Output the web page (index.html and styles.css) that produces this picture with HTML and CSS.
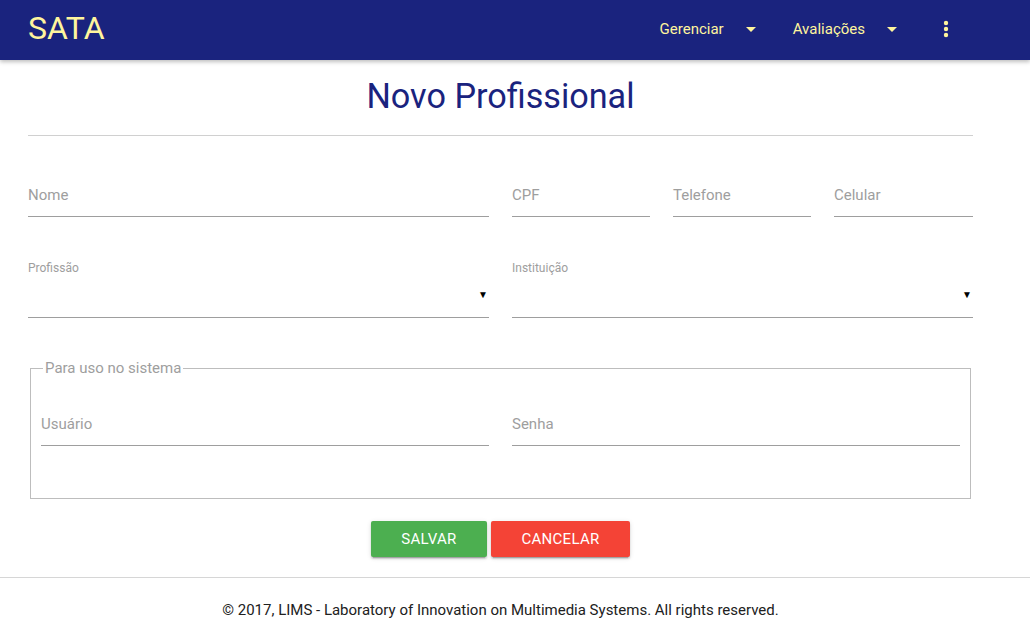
FILE: index.html
```html
<!DOCTYPE html>
<html lang="pt">
<head>
<meta charset="utf-8">
<title>SATA - Novo Profissional</title>
<link rel="stylesheet" href="styles.css">
</head>
<body>
<nav class="navbar">
  <a class="brand">SATA</a>
  <ul class="menu">
    <li class="menu-item">Gerenciar <span class="caret"></span></li>
    <li class="menu-item">Avaliações <span class="caret"></span></li>
    <li class="menu-more">
      <svg width="6" height="18" viewBox="0 0 6 18"><circle cx="3" cy="3" r="2.2" fill="#fff59d"/><circle cx="3" cy="9" r="2.2" fill="#fff59d"/><circle cx="3" cy="15" r="2.2" fill="#fff59d"/></svg>
    </li>
  </ul>
</nav>

<main class="container">
  <h1 class="title">Novo Profissional</h1>
  <hr class="divider">

  <form class="form">
    <div class="row row-1">
      <div class="field"><span class="placeholder">Nome</span></div>
      <div class="field"><span class="placeholder">CPF</span></div>
      <div class="field"><span class="placeholder">Telefone</span></div>
      <div class="field"><span class="placeholder">Celular</span></div>
    </div>

    <div class="row row-2">
      <div class="select-field">
        <label class="small-label">Profissão</label>
        <div class="select"><span class="arrow">▼</span></div>
      </div>
      <div class="select-field">
        <label class="small-label">Instituição</label>
        <div class="select"><span class="arrow">▼</span></div>
      </div>
    </div>

    <fieldset class="system">
      <legend>Para uso no sistema</legend>
      <div class="row row-sys">
        <div class="field"><span class="placeholder">Usuário</span></div>
        <div class="field"><span class="placeholder">Senha</span></div>
      </div>
    </fieldset>

    <div class="actions">
      <button type="button" class="btn btn-save">SALVAR</button>
      <button type="button" class="btn btn-cancel">CANCELAR</button>
    </div>
  </form>
</main>

<footer class="footer">
  <p class="footer-text">© 2017, LIMS - Laboratory of Innovation on Multimedia Systems. All rights reserved.</p>
</footer>
</body>
</html>
```
FILE: styles.css
```css
* { box-sizing: border-box; }
html, body { margin: 0; padding: 0; }
body {
  font-family: Roboto, "Liberation Sans", Arial, sans-serif;
  background: #fff;
  color: #212121;
}

.navbar {
  height: 60px;
  background: #1a237e;
  display: flex;
  align-items: center;
  justify-content: space-between;
  padding: 0 0 0 28px;
  box-shadow: 0 2px 4px rgba(0,0,0,0.25);
  position: relative;
  z-index: 1;
}
.brand {
  color: #fff59d;
  font-size: 32px;
  line-height: 60px;
  margin-top: -4px;
}
.menu {
  list-style: none;
  margin: 0;
  padding: 0;
  display: flex;
  align-items: center;
  height: 60px;
  margin-top: -2px;
}
.menu-item {
  color: #fff59d;
  font-size: 15px;
  display: flex;
  align-items: center;
  margin-right: 37px;
}
.caret {
  display: inline-block;
  width: 0; height: 0;
  border-left: 5px solid transparent;
  border-right: 5px solid transparent;
  border-top: 5px solid #fff59d;
  margin-left: 22px;
}
.menu-more {
  display: flex;
  justify-content: center;
  box-sizing: content-box;
  width: 12px;
  padding: 0 78px 0 0;
  margin-left: 6px;
}

.container {
  margin: 0 57px 0 28px;
}
.title {
  margin: 0;
  padding-top: 16px;
  text-align: center;
  font-weight: 400;
  font-size: 34.2px;
  line-height: 40px;
  color: #1a237e;
}
.divider {
  border: 0;
  border-top: 1px solid #d0d0d0;
  margin: 19px 0 0;
}

.form { padding-top: 36px; }
.row {
  display: grid;
  gap: 23px;
}
.row-1 { grid-template-columns: 461px 138px 138px 139px; }
.row-2 { grid-template-columns: 461px 461px; margin-top: 44px; }
.row-sys { grid-template-columns: 448px 448px; }

.field {
  height: 45px;
  border-bottom: 1px solid #9e9e9e;
  display: flex;
  align-items: center;
  padding-top: 1px;
}
.placeholder {
  color: #9e9e9e;
  font-size: 15px;
}
.small-label {
  display: block;
  color: #9e9e9e;
  font-size: 12px;
  line-height: 14px;
}
.select {
  height: 43px;
  border-bottom: 1px solid #9e9e9e;
  display: flex;
  align-items: center;
  justify-content: flex-end;
  padding-right: 1px;
}
.arrow {
  font-size: 10px;
  color: #000;
  margin-top: -4px;
}

.system {
  margin: 41px 3px 0 2px;
  padding: 24px 10px 52px 10px;
  border: 1px solid #bdbdbd;
}
.system legend {
  color: #9e9e9e;
  font-size: 15px;
  padding: 0 2px;
  margin-left: 2px;
}

.actions {
  display: flex;
  justify-content: center;
  gap: 4px;
  margin-top: 22px;
}
.btn {
  height: 36px;
  border: 0;
  border-radius: 2px;
  color: #fff;
  font-family: Roboto, "Liberation Sans", Arial, sans-serif;
  font-size: 15px;
  letter-spacing: 0.3px;
  box-shadow: 0 2px 2px rgba(0,0,0,0.14), 0 1px 5px rgba(0,0,0,0.12), 0 3px 1px -2px rgba(0,0,0,0.2);
}
.btn-save { background: #4caf50; width: 116px; }
.btn-cancel { background: #f44336; width: 139px; }

.footer {
  margin-top: 20px;
  border-top: 1px solid #d6d6d6;
}
.footer-text {
  margin: 0 57px 0 28px;
  text-align: center;
  font-size: 15px;
  color: #212121;
  padding-top: 23px;
  line-height: 18px;
}
```
